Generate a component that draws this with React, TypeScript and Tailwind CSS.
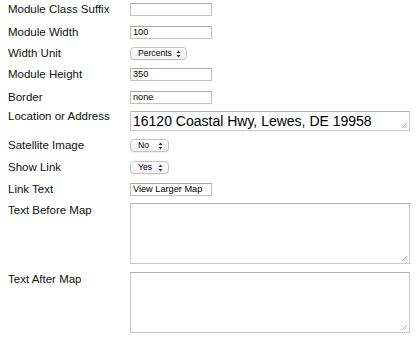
import React from "react";

const labelCls =
  "w-[122px] shrink-0 pl-[8px] text-[11.5px] leading-[13px] text-[#111] [font-family:'Liberation_Sans',Arial,sans-serif]";

function TextInput({ value }: { value?: string }) {
  return (
    <div className="w-[82px] h-[13px] border border-[#c2c2c2] border-t-[#a9a9a9] bg-white flex items-center px-[2px] text-[9.2px] leading-none text-black [font-family:'Liberation_Sans',Arial,sans-serif]">
      {value}
    </div>
  );
}

function Select({ value, width }: { value: string; width: string }) {
  return (
    <div
      className={`${width} h-[13px] border border-[#c4c4c4] rounded-[4px] bg-gradient-to-b from-white to-[#f1f1f1] flex items-center justify-between pl-[7px] pr-[5px] text-[8.6px] leading-none text-black [font-family:'Liberation_Sans',Arial,sans-serif] shadow-[0_1px_0_rgba(0,0,0,0.05)]`}
    >
      <span>{value}</span>
      <svg width="5" height="8" viewBox="0 0 5 8">
        <path d="M0.5 3 L2.5 0.5 L4.5 3 Z" fill="#333" />
        <path d="M0.5 5 L2.5 7.5 L4.5 5 Z" fill="#333" />
      </svg>
    </div>
  );
}

function Area({ h, children }: { h: string; children?: React.ReactNode }) {
  return (
    <div
      className={`relative w-[280px] ${h} border border-[#c9c9c9] border-t-[#b3b3b3] bg-white`}
    >
      {children}
      <svg
        className="absolute right-[1px] bottom-[1px]"
        width="7"
        height="7"
        viewBox="0 0 7 7"
      >
        <path d="M6 1 L1 6 M6 3.5 L3.5 6" stroke="#9a9a9a" strokeWidth="0.8" />
      </svg>
    </div>
  );
}

export default function App() {
  return (
    <div className="w-[420px] h-[341px] bg-white overflow-hidden pt-[3px]">
      <div className="flex items-center">
        <div className={labelCls}>Module Class Suffix</div>
        <div className="pl-[8px]">
          <TextInput />
        </div>
      </div>
      <div className="flex items-center mt-[10px]">
        <div className={labelCls}>Module Width</div>
        <div className="pl-[8px]">
          <TextInput value="100" />
        </div>
      </div>
      <div className="flex items-center mt-[8px]">
        <div className={labelCls}>Width Unit</div>
        <div className="pl-[8px]">
          <Select value="Percents" width="w-[57px]" />
        </div>
      </div>
      <div className="flex items-center mt-[8px]">
        <div className={labelCls}>Module Height</div>
        <div className="pl-[8px]">
          <TextInput value="350" />
        </div>
      </div>
      <div className="flex items-center mt-[10px]">
        <div className={labelCls}>Border</div>
        <div className="pl-[8px]">
          <TextInput value="none" />
        </div>
      </div>
      <div className="flex items-start mt-[7px]">
        <div className={`${labelCls} -mt-[1px]`}>Location or Address</div>
        <div className="pl-[8px]">
          <Area h="h-[20px]">
            <div className="pl-[2px] pt-[1px] text-[14px] leading-[17px] text-black [font-family:'Liberation_Sans',Arial,sans-serif]">
              16120 Coastal Hwy, Lewes, DE 19958
            </div>
          </Area>
        </div>
      </div>
      <div className="flex items-center mt-[8px]">
        <div className={labelCls}>Satellite Image</div>
        <div className="pl-[8px]">
          <Select value="No" width="w-[39px]" />
        </div>
      </div>
      <div className="flex items-center mt-[9px]">
        <div className={labelCls}>Show Link</div>
        <div className="pl-[8px]">
          <Select value="Yes" width="w-[39px]" />
        </div>
      </div>
      <div className="flex items-center mt-[9px]">
        <div className={labelCls}>Link Text</div>
        <div className="pl-[8px]">
          <TextInput value="View Larger Map" />
        </div>
      </div>
      <div className="flex items-start mt-[7px]">
        <div className={`${labelCls} mt-[1px]`}>Text Before Map</div>
        <div className="pl-[8px]">
          <Area h="h-[61px]" />
        </div>
      </div>
      <div className="flex items-start mt-[8px]">
        <div className={`${labelCls} mt-[1px]`}>Text After Map</div>
        <div className="pl-[8px]">
          <Area h="h-[61px]" />
        </div>
      </div>
    </div>
  );
}
